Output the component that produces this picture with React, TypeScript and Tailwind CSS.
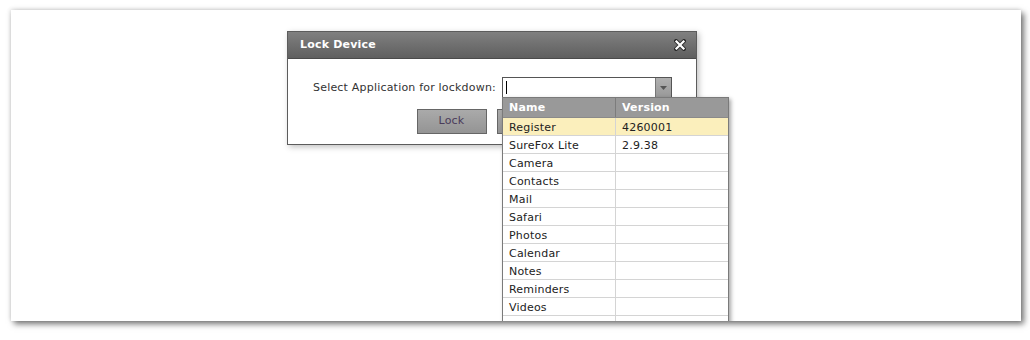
// LockDeviceDialog: modal with application picker dropdown open
const APPS: { name: string; version: string }[] = [
  { name: 'Register', version: '4260001' },
  { name: 'SureFox Lite', version: '2.9.38' },
  { name: 'Camera', version: '' },
  { name: 'Contacts', version: '' },
  { name: 'Mail', version: '' },
  { name: 'Safari', version: '' },
  { name: 'Photos', version: '' },
  { name: 'Calendar', version: '' },
  { name: 'Notes', version: '' },
  { name: 'Reminders', version: '' },
  { name: 'Videos', version: '' },
  { name: '', version: '' },
];

const font = "font-['DejaVu_Sans',Verdana,sans-serif] tracking-[0.2px]";

export default function App() {
  return (
    <div className={`w-[1030px] h-[340px] bg-white pt-[10px] pl-[11px] ${font}`}>
      <div className="relative w-[1010px] h-[311px] bg-white overflow-hidden shadow-[3px_3px_6px_rgba(0,0,0,0.55),-1px_-1px_4px_rgba(0,0,0,0.12)]">
        {/* dialog */}
        <div className="ml-[276px] mt-[21px] w-[410px] h-[114px] bg-white border border-[#5c5c5c] shadow-[2px_2px_6px_rgba(0,0,0,0.25)]">
          <div className="h-[27px] flex items-center justify-between px-[12px] bg-gradient-to-b from-[#808080] to-[#5f5f5f] border-b border-[#4a4a4a]">
            <span className="text-[11px] font-bold text-white">Lock Device</span>
            <svg width="12" height="12" viewBox="0 0 12 12" className="mr-[-2px]">
              <path d="M2 2 L10 10 M10 2 L2 10" stroke="#2e2e2e" strokeWidth="4" strokeLinecap="square" />
              <path d="M2.5 2.5 L9.5 9.5 M9.5 2.5 L2.5 9.5" stroke="#fff" strokeWidth="2.2" strokeLinecap="square" />
            </svg>
          </div>
          <div className="flex items-center mt-[18px] ml-[25px]">
            <span className="text-[11px] text-[#333] pt-[2px]">Select Application for lockdown:</span>
            <div className="ml-[6px] w-[170px] h-[21px] flex border border-[#555] bg-white">
              <div className="flex-1 flex items-center pl-[3px]">
                <div className="w-px h-[13px] bg-black" />
              </div>
              <div className="w-[16px] bg-gradient-to-b from-[#b0b0b0] to-[#999] border-l border-[#777] flex items-center justify-center">
                <svg width="7" height="4" viewBox="0 0 7 4">
                  <path d="M0 0 L7 0 L3.5 4 Z" fill="#555" />
                </svg>
              </div>
            </div>
          </div>
          <div className="flex justify-center gap-[10px] mt-[11px] ml-[-1px]">
            <button className="w-[70px] h-[25px] border border-[#666] bg-gradient-to-b from-[#aaa] to-[#949494] text-[11px] text-[#4a3b5a]">
              Lock
            </button>
            <button className="w-[70px] h-[25px] border border-[#666] bg-gradient-to-b from-[#aaa] to-[#949494] text-[11px] text-[#4a3b5a]">
              Cancel
            </button>
          </div>
        </div>

        {/* dropdown list */}
        <div className="absolute left-[491px] top-[87px] w-[227px] bg-white border border-[#7a7a7a] shadow-[2px_2px_4px_rgba(0,0,0,0.35)]">
          <div className="flex h-[20px] bg-[#999] text-white font-bold text-[11px] border-b border-[#8a8a8a]">
            <div className="w-[113px] pl-[6px] pt-[2px] flex items-center border-r border-[#7c7c7c]">Name</div>
            <div className="flex-1 pl-[6px] pt-[2px] flex items-center">Version</div>
          </div>
          {APPS.map((app, i) => (
            <div
              key={i}
              className={`flex h-[18px] text-[11px] text-[#222] border-b border-[#d4d4d4] ${i === 0 ? 'bg-[#fbefbc]' : 'bg-white'}`}
            >
              <div className="w-[113px] pl-[6px] pt-[4px] flex items-center border-r border-[#d4d4d4]">{app.name}</div>
              <div className="flex-1 pl-[6px] pt-[4px] flex items-center">{app.version}</div>
            </div>
          ))}
        </div>
      </div>
    </div>
  );
}
